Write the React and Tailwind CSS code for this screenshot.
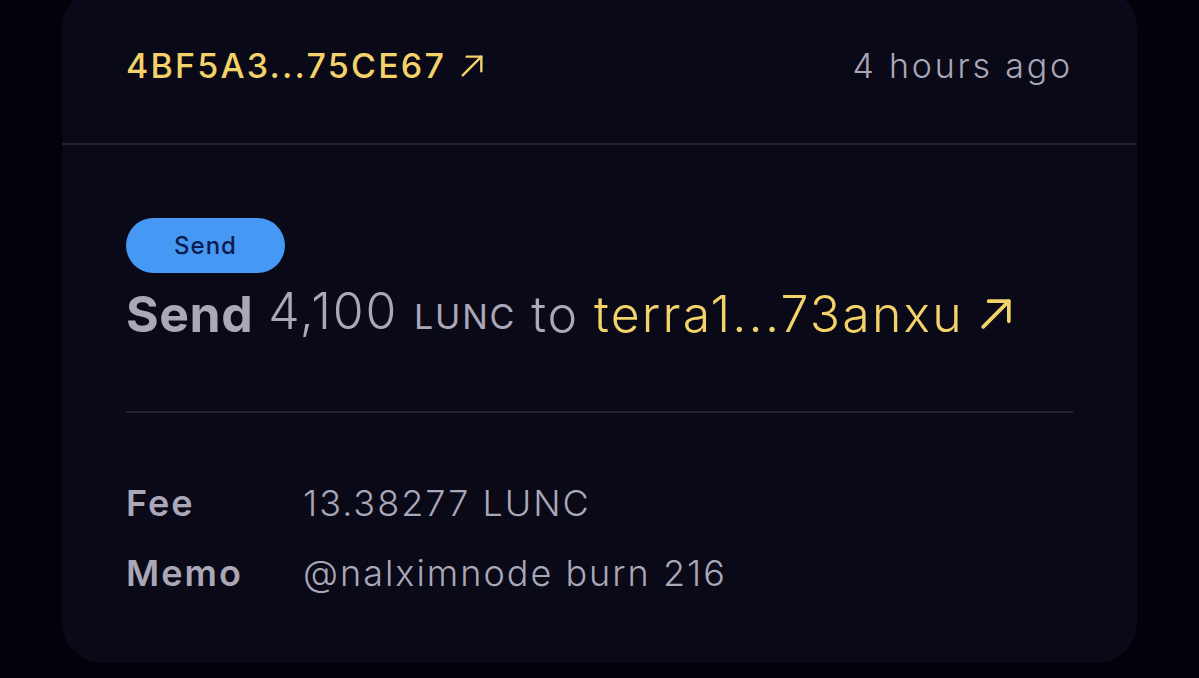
import React from 'react'

const Arrow = ({ className, width = 2 }) => (
    <svg viewBox="0 0 24 24" fill="none" stroke="currentColor" strokeWidth={width} strokeLinecap="round" strokeLinejoin="round" className={className}>
        <path d="M5 19 L19 5" />
        <path d="M8 5 H19 V16" />
    </svg>
)

const App = () => {
    return (
        <div className="w-[1199px] h-[678px] bg-[#03020a] overflow-hidden" style={{ fontFamily: 'Inter, "Noto Sans", sans-serif' }}>
            <div className="ml-[62px] mt-[-12px] w-[1075px] h-[675px] rounded-[40px] bg-[#0a0917] flex flex-col">
                {/* Header */}
                <div className="h-[157px] flex items-center justify-between px-[64px] border-b-2 border-[#24222f]">
                    <a className="flex items-center gap-[10px] text-[34px] font-medium tracking-[2.2px] text-[#f3d26a]">
                        4BF5A3...75CE67
                        <Arrow className="w-[32px] h-[32px]" width={1.8} />
                    </a>
                    <span className="text-[34px] font-light tracking-[2.8px] text-[#a9a7b8]">4 hours ago</span>
                </div>

                {/* Message */}
                <div className="mx-[64px] pt-[73px] pb-[66px] border-b-2 border-[#24222f]">
                    <span className="inline-flex items-center justify-center w-[159px] h-[55px] rounded-full bg-[#4599f4] text-[#0b1b4d] text-[24px] font-medium tracking-[1px]">
                        Send
                    </span>
                    <p className="mt-[10px] text-[50px] leading-[56px] text-[#a9a7b8] flex items-center gap-[15px] whitespace-nowrap tracking-[1.8px]">
                        <span className="font-bold tracking-[0.5px]">Send</span>
                        <span className="font-light">4,100 <span className="text-[34px] font-normal">LUNC</span></span>
                        <span className="font-light">to</span>
                        <a className="flex items-center gap-[10px] text-[#f3d26a] font-light tracking-[2.2px]">
                            terra1...73anxu
                            <Arrow className="w-[44px] h-[44px]" width={2} />
                        </a>
                    </p>
                </div>

                {/* Details */}
                <div className="mx-[64px] pt-[68px] grid grid-cols-[177px_1fr] gap-y-[26px] text-[36px] leading-[44px] text-[#a9a7b8] tracking-[2px]">
                    <span className="font-semibold">Fee</span>
                    <span className="font-light">13.38277 LUNC</span>
                    <span className="font-semibold">Memo</span>
                    <span className="font-light">@nalximnode burn 216</span>
                </div>
            </div>
        </div>
    )
}

export default App
